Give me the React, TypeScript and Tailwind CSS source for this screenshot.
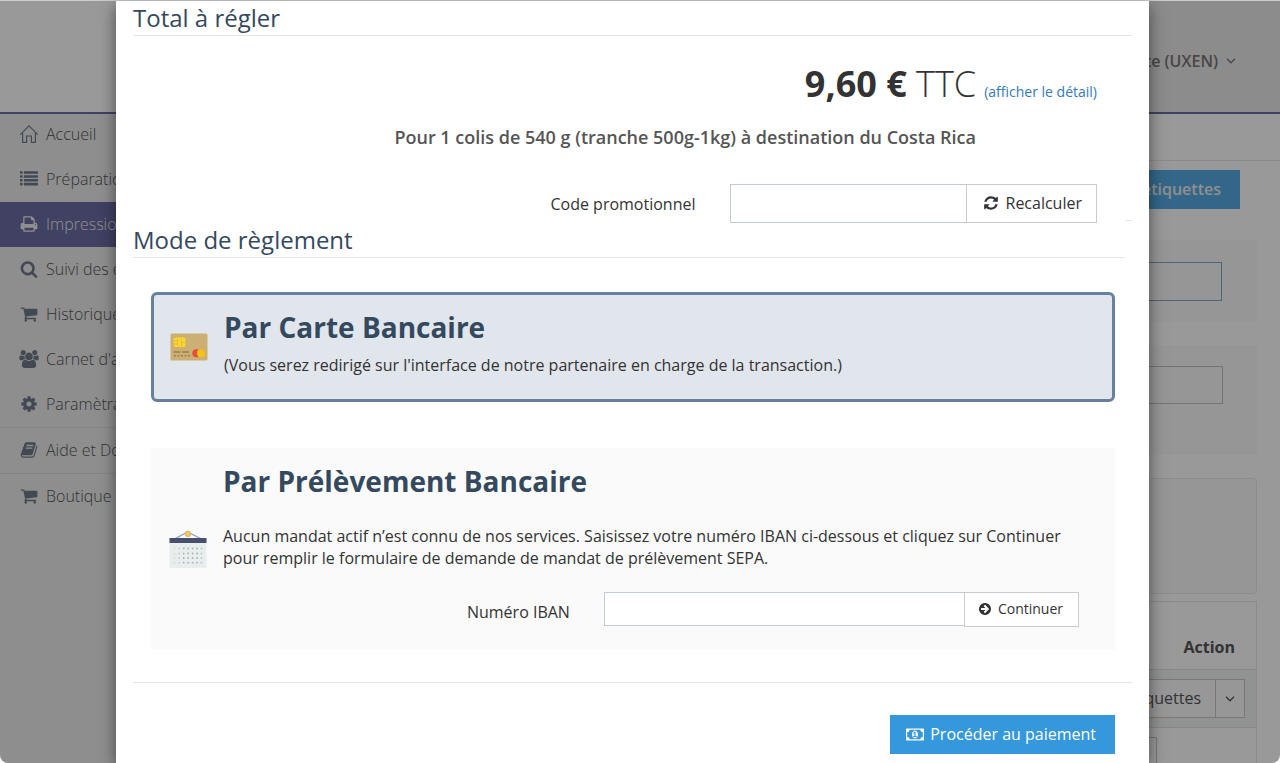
import React from "react";

const glyphs = {
  list: "M256 1312v192q0 13-9.500 22.500t-22.500 9.500h-192q-13 0-22.500-9.500t-9.500-22.500v-192q0-13 9.500-22.500t22.500-9.500h192q13 0 22.500 9.500t9.500 22.500zM256 928v192q0 13-9.500 22.500t-22.500 9.500h-192q-13 0-22.500-9.500t-9.500-22.500v-192q0-13 9.500-22.500t22.500-9.500h192q13 0 22.500 9.500t9.500 22.500zM256 544v192q0 13-9.500 22.500t-22.500 9.500h-192q-13 0-22.500-9.500t-9.500-22.500v-192q0-13 9.500-22.500t22.500-9.500h192q13 0 22.500 9.500t9.500 22.500zM1792 1312v192q0 13-9.500 22.500t-22.500 9.500h-1344q-13 0-22.500-9.500t-9.500-22.500v-192q0-13 9.500-22.500t22.500-9.500h1344q13 0 22.500 9.500t9.500 22.500zM256 160v192q0 13-9.500 22.500t-22.500 9.500h-192q-13 0-22.500-9.500t-9.500-22.500v-192q0-13 9.500-22.500t22.500-9.500h192q13 0 22.500 9.500t9.500 22.500zM1792 928v192q0 13-9.500 22.500t-22.500 9.500h-1344q-13 0-22.500-9.500t-9.500-22.500v-192q0-13 9.500-22.500t22.500-9.500h1344q13 0 22.500 9.500t9.500 22.500zM1792 544v192q0 13-9.500 22.500t-22.500 9.500h-1344q-13 0-22.500-9.500t-9.500-22.500v-192q0-13 9.500-22.500t22.500-9.500h1344q13 0 22.500 9.500t9.500 22.500zM1792 160v192q0 13-9.500 22.500t-22.500 9.500h-1344q-13 0-22.500-9.500t-9.500-22.500v-192q0-13 9.500-22.500t22.500-9.500h1344q13 0 22.500 9.500t9.500 22.500z",
  print: "M448 1536h896v-256h-896v256zm0-640h896v-384h-160q-40 0-68-28t-28-68v-160h-640v640zm1152 64q0-26-19-45t-45-19-45 19-19 45 19 45 45 19 45-19 19-45zm128 0v416q0 13-9.500 22.500t-22.500 9.500h-224v160q0 40-28 68t-68 28h-960q-40 0-68-28t-28-68v-160h-224q-13 0-22.500-9.500t-9.500-22.500v-416q0-79 56.500-135.500t135.500-56.500h64v-544q0-40 28-68t68-28h672q40 0 88 20t76 48l152 152q28 28 48 76t20 88v256h64q79 0 135.500 56.500t56.500 135.500z",
  search: "M1216 832q0-185-131.500-316.500t-316.500-131.500-316.500 131.500-131.500 316.500 131.500 316.500 316.500 131.500 316.500-131.500 131.500-316.500zm512 832q0 52-38 90t-90 38q-54 0-90-38l-343-342q-179 124-399 124-143 0-273.500-55.500t-225-150-150-225-55.500-273.500 55.500-273.500 150-225 225-150 273.500-55.500 273.500 55.500 225 150 150 225 55.500 273.500q0 220-124 399l343 343q37 37 37 90z",
  cart: "M704 1536q0 52-38 90t-90 38-90-38-38-90 38-90 90-38 90 38 38 90zm896 0q0 52-38 90t-90 38-90-38-38-90 38-90 90-38 90 38 38 90zm128-1088v512q0 24-16.500 42.500t-40.500 21.500l-1044 122q13 60 13 70 0 16-24 64h920q26 0 45 19t19 45-19 45-45 19h-1024q-26 0-45-19t-19-45q0-11 8-31.500t16-36 21.500-40 15.500-29.500l-177-823h-204q-26 0-45-19t-19-45 19-45 45-19h256q16 0 28.500 6.500t19.500 15.500 13 24.500 8 26 5.500 29.500 4.500 26h1201q26 0 45 19t19 45z",
  users: "M593 896q-162 5-265 128h-134q-82 0-138-40.500t-56-118.500q0-353 124-353 6 0 43.500 21t97.500 42.500 119 21.500q67 0 133-23-5 37-5 66 0 159 93 256zm1071 637q0 120-73 189.500t-194 69.500h-874q-121 0-194-69.500t-73-189.500q0-53 3.500-103.500t14-109 26.500-108.500 43-97.500 62-81 85.500-53.500 111.500-20q10 0 43 21.500t73 48 107 48 135 21.500 135-21.500 107-48 73-48 43-21.500q61 0 111.500 20t85.500 53.500 62 81 43 97.500 26.500 108.500 14 109 3.500 103.500zm-1024-1277q0 106-75 181t-181 75-181-75-75-181 75-181 181-75 181 75 75 181zm704 384q0 159-112.500 271.500t-271.500 112.500-271.500-112.500-112.500-271.500 112.500-271.500 271.500-112.500 271.500 112.500 112.500 271.500zm576 225q0 78-56 118.500t-138 40.500h-134q-103-123-265-128 93-97 93-256 0-29-5-66 66 23 133 23 59 0 119-21.500t97.500-42.500 43.500-21q124 0 124 353zm-128-609q0 106-75 181t-181 75-181-75-75-181 75-181 181-75 181 75 75 181z",
  cog: "M1152 896q0-106-75-181t-181-75-181 75-75 181 75 181 181 75 181-75 75-181zm512-109v222q0 12-8 23t-20 13l-185 28q-19 54-39 91 35 50 107 138 10 12 10 25t-9 23q-27 37-99 108t-94 71q-12 0-26-9l-138-108q-44 23-91 38-16 136-29 186-7 28-36 28h-222q-14 0-24.500-8.500t-11.500-21.500l-28-184q-49-16-90-37l-141 107q-10 9-25 9-14 0-25-11-126-114-165-168-7-10-7-23 0-12 8-23 15-21 51-66.500t54-70.500q-27-50-41-99l-183-27q-13-2-21-12.500t-8-23.500v-222q0-12 8-23t19-13l186-28q14-46 39-92-40-57-107-138-10-12-10-24 0-10 9-23 26-36 98.500-107.500t94.500-71.500q13 0 26 10l138 107q44-23 91-38 16-136 29-186 7-28 36-28h222q14 0 24.500 8.500t11.500 21.500l28 184q49 16 90 37l142-107q9-9 24-9 13 0 25 10 129 119 165 170 7 8 7 22 0 12-8 23-15 21-51 66.500t-54 70.500q26 50 41 98l183 28q13 2 21 12.500t8 23.500z",
  book: "M1703 478q40 57 18 129l-275 906q-19 64-76.500 107.500t-122.500 43.500h-923q-77 0-148.500-53.500t-99.500-131.500q-24-67-2-127 0-4 3-27t4-37q1-8-3-21.500t-3-19.500q2-11 8-21t16.500-23.500 16.500-23.500q23-38 45-91.500t30-91.500q3-10 .5-30t-.5-28q3-11 17-28t17-23q21-36 42-92t25-90q1-9-2.500-32t.5-28q4-13 22-30.500t22-22.500q19-26 42.500-84.500t27.500-96.500q1-8-3-25.500t-2-26.500q2-8 9-18t18-23 17-21q8-12 16.500-30.500t15-35 16-36 19.500-32 26.500-23.500 36-11.500 47.500 5.500l-1 3q38-9 51-9h761q74 0 114 56t18 130l-274 906q-36 119-71.500 153.500t-128.500 34.500h-869q-27 0-38 15-11 16-1 43 24 70 144 70h923q29 0 56-15.500t35-41.500l300-987q7-22 5-57 38 15 59 43zm-1064 2q-4 13 2 22.500t20 9.500h608q13 0 25.500-9.500t16.500-22.500l21-64q4-13-2-22.500t-20-9.500h-608q-13 0-25.500 9.500t-16.500 22.500zm-83 256q-4 13 2 22.500t20 9.500h608q13 0 25.500-9.500t16.500-22.500l21-64q4-13-2-22.500t-20-9.500h-608q-13 0-25.500 9.500t-16.500 22.500z",
  refresh: "M1639 1056q0 5-1 7-64 268-268 434.500t-478 166.500q-146 0-282.500-55t-243.500-157l-129 129q-19 19-45 19t-45-19-19-45v-448q0-26 19-45t45-19h448q26 0 45 19t19 45-19 45l-137 137q71 66 161 102t187 36q134 0 250-65t186-179q11-17 53-117 8-23 30-23h192q13 0 22.500 9.500t9.500 22.500zm25-800v448q0 26-19 45t-45 19h-448q-26 0-45-19t-19-45 19-45l138-138q-148-137-349-137-134 0-250 65t-186 179q-11 17-53 117-8 23-30 23h-199q-13 0-22.500-9.500t-9.500-22.500v-7q65-268 270-434.500t480-166.500q146 0 284 55.500t245 156.500l130-129q19-19 45-19t45 19 19 45z",
  arrow: "M1413 896q0-27-18-45l-91-91-362-362q-18-18-45-18t-45 18l-91 91q-18 18-18 45t18 45l189 189h-502q-26 0-45 19t-19 45v128q0 26 19 45t45 19h502l-189 189q-19 19-19 45t19 45l91 91q18 18 45 18t45-18l362-362 91-91q18-18 18-45zm251 0q0 209-103 385.500t-279.500 279.500-385.500 103-385.500-103-279.500-279.500-103-385.500 103-385.500 279.500-279.500 385.500-103 385.500 103 279.500 279.500 103 385.500z",
  money: "M768 1152h384v-96h-128v-448h-114l-148 137 77 80q42-37 55-57h2v288h-128v96zm512-256q0 70-21 142t-59.500 134-101.500 101-138 39-138-39-101.500-101-59.500-134-21-142 21-142 59.500-134 101.500-101 138-39 138 39 101.500 101 59.500 134 21 142zm512 256v-512q-106 0-181-75t-75-181h-1152q0 106-75 181t-181 75v512q106 0 181 75t75 181h1152q0-106 75-181t181-75zm128-832v1152q0 26-19 45t-45 19h-1792q-26 0-45-19t-19-45v-1152q0-26 19-45t45-19h1792q26 0 45 19t19 45z",
};

type GlyphName = keyof typeof glyphs;

function Glyph({ name, className }: { name: GlyphName; className: string }) {
  const wide = name === "users" || name === "money";
  return (
    <svg viewBox={wide ? "0 0 1920 1792" : "0 0 1792 1792"} fill="currentColor" className={className} aria-hidden="true">
      <path d={glyphs[name]} fillRule={name === "arrow" ? "evenodd" : "nonzero"} />
    </svg>
  );
}

function HomeIcon() {
  return (
    <svg viewBox="0 0 20 20" className="h-5 w-5" fill="none" stroke="currentColor" strokeWidth="1.2" aria-hidden="true">
      <path d="M1.300 10.700 10 1.800l8.700 8.900M3.600 9v9.400h4V12h4.800v6.400h4V9" />
    </svg>
  );
}

function Chevron() {
  return (
    <svg viewBox="0 0 10 6" className="h-1.5 w-2.5" fill="none" stroke="currentColor" strokeWidth="1.3" aria-hidden="true">
      <path d="M1 .8 5 4.800 9 .8" />
    </svg>
  );
}

function CardIcon() {
  return (
    <svg viewBox="0 0 38 28" className="h-7 w-[38px] shrink-0" aria-hidden="true">
      <rect x=".5" y=".5" width="37" height="27" rx="1.500" fill="#ccb073" />
      <rect x="3.500" y="4.500" width="12" height="9.500" rx="2" fill="#f9d532" />
      <path d="M3.500 8h4M3.500 11h4M7.500 6v6M11.500 14V9.500h4M11.500 9V6.500" fill="none" stroke="#dfb528" strokeWidth=".7" />
      <path d="M3.500 19h7M12 19h7" stroke="#80683d" strokeWidth="1.200" />
      <path d="M4 22.700h16" stroke="#9a8152" strokeWidth="1.400" strokeDasharray="2 1.500" />
      <circle cx="26.300" cy="20.300" r="4" fill="#e74c3c" />
      <circle cx="31" cy="20.300" r="4" fill="#f4c414" />
    </svg>
  );
}

function CalendarIcon() {
  const tints = ["#dfe0c0", "#e3bfc0", "#a9b1b5", "#a9b1b5", "#a9b1b5", "#a9b1b5", "#b5c6c3"];
  return (
    <svg viewBox="0 0 38 38" className="h-[38px] w-[38px] shrink-0" aria-hidden="true">
      <path d="M6.500 8.500 18.500 2l13 6.500" fill="none" stroke="#8d9bca" strokeWidth="1.300" />
      <circle cx="18.900" cy="3.900" r="3.100" fill="#e8b957" />
      <circle cx="18.900" cy="3.900" r="1.300" fill="#f4d386" />
      <rect x=".5" y="12" width="37" height="26" fill="#e8eded" />
      <rect x=".5" y="8" width="37" height="5" fill="#464f6d" />
      {[18.500, 23.500, 28, 32.700].map((cy) =>
        tints.map((tint, i) => <circle key={`${cy}-${i}`} cx={5.800 + i * 4.450} cy={cy} r=".9" fill={tint} />)
      )}
    </svg>
  );
}

const menu: { label: string; icon: GlyphName | null; size: string; active?: boolean; ruled?: boolean }[] = [
  { label: "Accueil", icon: null, size: "" },
  { label: "Préparation", icon: "list", size: "h-[18px] w-[18px]" },
  { label: "Impression", icon: "print", size: "h-[18px] w-[18px]", active: true },
  { label: "Suivi des envois", icon: "search", size: "h-[18px] w-[18px]" },
  { label: "Historique", icon: "cart", size: "h-[18px] w-[18px]" },
  { label: "Carnet d'adresses", icon: "users", size: "h-[18px] w-5" },
  { label: "Paramètrage", icon: "cog", size: "h-[18px] w-[18px]" },
  { label: "Aide et Documentation", icon: "book", size: "h-[18px] w-[18px]", ruled: true },
  { label: "Boutique", icon: "cart", size: "h-[18px] w-[18px]", ruled: true },
];

function Background() {
  return (
    <div className="absolute inset-0 isolate flex flex-col overflow-hidden bg-white" aria-hidden="true">
      <header className="relative z-10 flex h-[114px] shrink-0 border-b-2 border-[#6b6da6]">
        <div className="w-[230px]" />
        <div className="flex flex-1 items-center justify-end gap-2 bg-[#e9e9e9] pt-2.5 pr-11 font-semibold text-[#777]">
          <span>Mon compte (UXEN)</span>
          <Chevron />
        </div>
      </header>
      <div className="-mt-0.5 flex flex-1">
        <nav className="w-[230px] shrink-0 bg-[#ededed]">
          {menu.map((item) => (
            <a
              key={item.label}
              href="#"
              className={`flex items-center gap-[7px] whitespace-nowrap pb-0.5 pl-[19px] font-light ${
                item.ruled ? "h-[46px] border-t border-[#dcdcdc]" : "h-[45px]"
              } ${item.active ? "bg-[#6b6da6] text-[#eee]" : "text-[#555]"}`}
            >
              <span className={`flex w-5 justify-center ${item.active ? "text-[#eee]" : "text-[#6f7b8a]"}`}>
                {item.icon ? <Glyph name={item.icon} className={item.size} /> : <HomeIcon />}
              </span>
              {item.label}
            </a>
          ))}
        </nav>
        <main className="flex-1">
          <div className="h-[49px] border-b border-[#e6e6e6]" />
          <div className="flex justify-end pt-[9px] pr-10">
            <button className="h-[39px] bg-[#55aae4] pr-[19px] pb-0.5 pl-5 font-semibold text-[#eee]">Créer des étiquettes</button>
          </div>
          <div className="mt-[31px] mr-[23px] ml-6 flex h-[82px] justify-end bg-[#fbfbfb] pt-[22px] pr-[35px]">
            <input aria-label="Filtre" className="h-[39px] w-80 border border-[#7fa9c9]" />
          </div>
          <div className="mt-[23px] mr-[23px] ml-6 flex h-[110px] justify-end bg-[#fbfbfb] pt-[21px] pr-[34px]">
            <input aria-label="Format" className="h-[38px] w-80 border border-[#bfc1c7]" />
          </div>
          <div className="mt-[23px] mr-[23px] ml-6 h-[116px] rounded border border-[#e8e8e8] bg-[#fafafa]" />
          <div className="mt-[7px] mr-[23px] ml-6 border border-[#e4e7e7]">
            <div className="flex h-[68px] items-end justify-end border-b border-[#e0e3e3] pr-[21px] pb-2.5 font-bold text-[#555]">Action</div>
            <div className="flex h-[58px] items-center justify-end border-b border-[#dfe3e3] bg-[#f2f6f5] pr-[11px] text-[#555]">
              <button className="h-[39px] border border-[#c8c8c8] bg-[#fcfcfc] px-3.5 pb-0.5">Étiquettes</button>
              <button aria-label="Plus d'actions" className="-ml-px flex h-[39px] w-[30px] items-center justify-center border border-[#c8c8c8] bg-[#fcfcfc]">
                <Chevron />
              </button>
            </div>
            <div className="flex justify-end pt-[9px] pr-[99px]">
              <button aria-label="Détail" className="h-[39px] w-32 border border-[#c8c8c8]" />
            </div>
          </div>
        </main>
      </div>
    </div>
  );
}

export default function App() {
  return (
    <div className="bg-white">
      <div className="relative min-h-screen overflow-hidden rounded-b-lg font-['Open_Sans','Noto_Sans',sans-serif] text-base text-[#333]">
        <Background />
        <div className="relative flex min-h-screen border-t border-[#ccc] bg-black/40 pr-[131px] pl-[116px]">
          <div role="dialog" aria-label="Règlement" className="flex-1 bg-white px-[17px] pb-[9px] shadow-[0_5px_15px_rgba(0,0,0,0.5)]">
            <section className="h-[220px] border-b border-[#e5e5e5]">
              <h2 className="flex h-[35px] items-center border-b border-[#e5e5e5] text-2xl text-[#34495e]">Total à régler</h2>
              <div className="pr-[35px]">
                <div className="flex items-baseline justify-end gap-2 pt-6 text-4xl leading-[48px]">
                  <p className="font-[350]">
                    <b className="font-bold">9,60 €</b> TTC
                  </p>
                  <a href="#" className="text-sm text-[#337ab7]">(afficher le détail)</a>
                </div>
                <p className="mt-[15px] mr-[121px] text-right text-lg font-semibold text-[#555]">
                  Pour 1 colis de 540 g (tranche 500g-1kg) à destination du Costa Rica
                </p>
                <div className="relative z-10 mt-[33px] flex items-center justify-end">
                  <label htmlFor="promo" className="mr-[34px]">Code promotionnel</label>
                  <input id="promo" className="h-[39px] w-[237px] border border-[#c2cad8] outline-none" />
                  <button className="-ml-px flex h-[39px] items-center gap-[7px] border border-[#ccc] pr-3.5 pb-0.5 pl-4">
                    <Glyph name="refresh" className="h-4 w-4" />
                    Recalculer
                  </button>
                </div>
              </div>
            </section>

            <section>
              <h2 className="relative -mt-px mr-[7px] flex h-[38px] items-center border-b border-[#e5e5e5] bg-white pt-0.5 text-2xl text-[#34495e]">
                Mode de règlement
              </h2>
              <div className="pr-[17px] pl-[18px]">
                <label className="relative mt-[34px] flex h-[110px] cursor-pointer items-center gap-4 rounded-md border-[3px] border-[#67809f] bg-[#e1e5ec] px-4">
                  <input type="radio" name="mode" defaultChecked className="sr-only" />
                  <CardIcon />
                  <span className="flex flex-col gap-1.5 pb-2.5">
                    <span className="text-[28px] leading-10 font-bold text-[#34495e]">Par Carte Bancaire</span>
                    <span>(Vous serez redirigé sur l'interface de notre partenaire en charge de la transaction.)</span>
                  </span>
                </label>

                <div className="mt-[46px] flex h-[202px] items-center gap-4 bg-[#fafafa] pr-9 pl-[18px]">
                  <CalendarIcon />
                  <div className="flex-1 pb-[11px]">
                    <h3 className="text-[28px] leading-10 font-bold text-[#34495e]">Par Prélèvement Bancaire</h3>
                    <p className="mt-6 leading-[22px]">
                      Aucun mandat actif n’est connu de nos services. Saisissez votre numéro IBAN ci-dessous et cliquez sur Continuer pour
                      remplir le formulaire de demande de mandat de prélèvement SEPA.
                    </p>
                    <div className="mt-[23px] flex items-start justify-end">
                      <label htmlFor="iban" className="mt-2 mr-[34px]">Numéro IBAN</label>
                      <input id="iban" className="h-[34px] w-[361px] border border-[#c2cad8] bg-white outline-none" />
                      <button className="-ml-px flex h-[35px] items-center gap-1.5 border border-[#ccc] bg-white pr-[15px] pl-[13px] text-sm">
                        <Glyph name="arrow" className="h-3.5 w-3.5" />
                        Continuer
                      </button>
                    </div>
                  </div>
                </div>
              </div>
            </section>

            <footer className="mt-8 flex justify-end border-t border-[#e5e5e5] pt-8 pr-[17px]">
              <button className="flex h-[39px] items-center gap-1.5 bg-[#3598dc] pr-[19px] pb-px pl-4 font-medium text-white">
                <Glyph name="money" className="h-[17px] w-[18px]" />
                Procéder au paiement
              </button>
            </footer>
          </div>
        </div>
      </div>
    </div>
  );
}
